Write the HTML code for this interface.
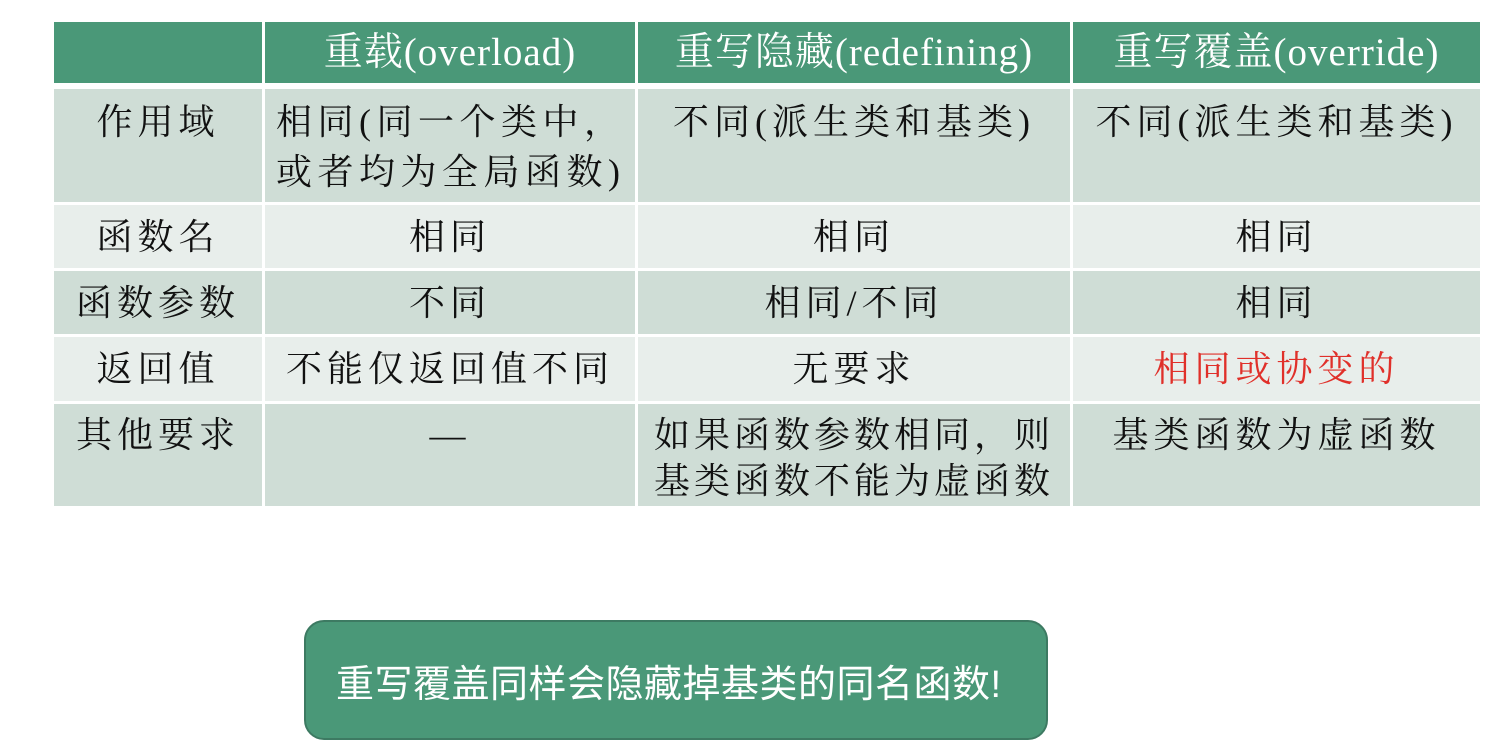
<!DOCTYPE html>
<html><head><meta charset="utf-8"><style>
body{margin:0;width:1507px;height:752px;background:#fff;position:relative;overflow:hidden;font-family:"Liberation Serif","Noto Serif CJK SC",serif;}
.c{position:absolute;box-sizing:border-box;color:#111;font-size:36px;letter-spacing:5px;text-align:center;line-height:50px;white-space:nowrap;}
.h{background:#4a9878;color:#fff;letter-spacing:1px;font-size:39px;display:flex;align-items:center;justify-content:center;}
.o{background:#cfddd6}.e{background:#e8eeeb}
.m{display:flex;align-items:center;justify-content:center}
.box{position:absolute;left:304px;top:620px;width:744px;height:120px;box-sizing:border-box;background:#4a9878;border:2px solid #3d7a62;border-radius:20px;color:#fff;font-family:"Liberation Sans","Noto Sans CJK SC",sans-serif;font-size:38px;display:flex;align-items:center;padding-left:30px;letter-spacing:0.5px}
</style></head><body>
<div class="c h" style="left:54px;top:22px;width:208px;height:61px"></div>
<div class="c h" style="left:265px;top:22px;width:370px;height:61px">重载(overload)</div>
<div class="c h" style="left:638px;top:22px;width:432px;height:61px">重写隐藏(redefining)</div>
<div class="c h" style="left:1073px;top:22px;width:407px;height:61px">重写覆盖(override)</div>

<div class="c o" style="left:54px;top:89px;width:208px;height:113px;padding-top:8px">作用域</div>
<div class="c o" style="left:265px;top:89px;width:370px;height:113px;padding-top:8px;text-align:left;padding-left:11px;letter-spacing:5.5px">相同(同一个类中，<br>或者均为全局函数)</div>
<div class="c o" style="left:638px;top:89px;width:432px;height:113px;padding-top:8px">不同(派生类和基类)</div>
<div class="c o" style="left:1073px;top:89px;width:407px;height:113px;padding-top:8px">不同(派生类和基类)</div>

<div class="c e m" style="left:54px;top:205px;width:208px;height:63px">函数名</div>
<div class="c e m" style="left:265px;top:205px;width:370px;height:63px">相同</div>
<div class="c e m" style="left:638px;top:205px;width:432px;height:63px">相同</div>
<div class="c e m" style="left:1073px;top:205px;width:407px;height:63px">相同</div>

<div class="c o m" style="left:54px;top:271px;width:208px;height:63px">函数参数</div>
<div class="c o m" style="left:265px;top:271px;width:370px;height:63px">不同</div>
<div class="c o m" style="left:638px;top:271px;width:432px;height:63px">相同/不同</div>
<div class="c o m" style="left:1073px;top:271px;width:407px;height:63px">相同</div>

<div class="c e m" style="left:54px;top:337px;width:208px;height:64px">返回值</div>
<div class="c e m" style="left:265px;top:337px;width:370px;height:64px">不能仅返回值不同</div>
<div class="c e m" style="left:638px;top:337px;width:432px;height:64px">无要求</div>
<div class="c e m" style="left:1073px;top:337px;width:407px;height:64px;color:#e0302a">相同或协变的</div>

<div class="c o" style="left:54px;top:404px;width:208px;height:102px;padding-top:8px;line-height:46px">其他要求</div>
<div class="c o" style="left:265px;top:404px;width:370px;height:102px;padding-top:8px;line-height:46px">—</div>
<div class="c o" style="left:638px;top:404px;width:432px;height:102px;padding-top:8px;line-height:46px;letter-spacing:4px">如果函数参数相同，则<br>基类函数不能为虚函数</div>
<div class="c o" style="left:1073px;top:404px;width:407px;height:102px;padding-top:8px;line-height:46px">基类函数为虚函数</div>

<div class="box">重写覆盖同样会隐藏掉基类的同名函数!</div>
</body></html>
